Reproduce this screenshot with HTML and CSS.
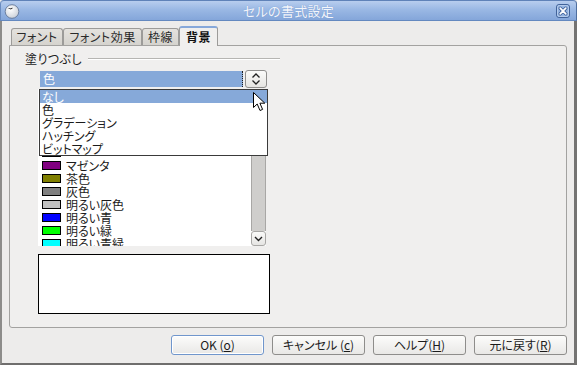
FILE: index.html
```html
<!DOCTYPE html>
<html lang="ja">
<head>
<meta charset="utf-8">
<title>セルの書式設定</title>
<link rel="stylesheet" href="styles.css">
</head>
<body>
<div class="window">
  <div class="titlebar">
    <div class="tb-left">
      <svg class="app-icon" width="16" height="16" viewBox="0 0 16 16">
        <defs>
          <radialGradient id="ig" cx="0.4" cy="0.35" r="0.7">
            <stop offset="0" stop-color="#ffffff"/>
            <stop offset="1" stop-color="#c9cfd8"/>
          </radialGradient>
        </defs>
        <circle cx="8" cy="8.5" r="6.8" fill="url(#ig)" stroke="#5a6f8f" stroke-width="0.8"/>
        <path d="M3.6 5.6 Q5.2 4.4 6.6 5.4 Q7.6 4.6 9 4.9 Q7.6 5.6 6.8 6.6 Q5.4 5.4 3.6 5.6 Z" fill="#1a1a1a"/>
      </svg>
    </div>
    <div class="title">セルの書式設定</div>
    <div class="tb-right">
      <svg class="close" width="14" height="14" viewBox="0 0 14 14">
        <rect x="0.5" y="0.5" width="13" height="13" rx="2.5" fill="#93b3e2" stroke="#41639a"/>
        <rect x="1.5" y="1.5" width="11" height="11" rx="1.8" fill="none" stroke="#bcd0ee" stroke-width="0.8"/>
        <path d="M4.2 4.2 L9.8 9.8 M9.8 4.2 L4.2 9.8" stroke="#41639a" stroke-width="3.4" stroke-linecap="round"/>
        <path d="M4.2 4.2 L9.8 9.8 M9.8 4.2 L4.2 9.8" stroke="#ffffff" stroke-width="1.7" stroke-linecap="round"/>
      </svg>
    </div>
  </div>
  <div class="body">
    <div class="tabs">
      <div class="tab tab-font">フォント</div>
      <div class="tab tab-effect">フォント効果</div>
      <div class="tab tab-border">枠線</div>
      <div class="tab tab-bg active">背景</div>
    </div>
    <div class="panel">
      <div class="section">
        <div class="section-head"><span class="section-label">塗りつぶし</span><span class="rule"></span></div>
        <div class="section-body">
          <div class="combo-wrap">
            <div class="combo">
              <div class="combo-field">色</div>
              <div class="combo-btn">
                <svg width="12" height="14" viewBox="0 0 12 14">
                  <path d="M2.5 5.5 L6 2 L9.5 5.5" fill="none" stroke="#222" stroke-width="1.3"/>
                  <path d="M2.5 8.5 L6 12 L9.5 8.5" fill="none" stroke="#222" stroke-width="1.3"/>
                </svg>
              </div>
            </div>
            <div class="popup">
              <div class="opt selected">なし</div>
              <div class="opt">色</div>
              <div class="opt">グラデーション</div>
              <div class="opt">ハッチング</div>
              <div class="opt">ビットマップ</div>
            </div>
            <svg class="cursor" width="14" height="20" viewBox="0 0 14 20">
              <path d="M0.5 0.5 L0.5 15.5 L4.2 12 L7 18.5 L9.6 17.4 L6.9 11.2 L11.8 11.2 Z" fill="#ffffff" stroke="#000000" stroke-width="1" stroke-linejoin="miter"/>
            </svg>
          </div>
          <div class="colorlist">
            <div class="items">
              <div class="item item-partial"><span class="swatch sw-red"></span></div>
              <div class="item"><span class="swatch sw-magenta"></span>マゼンタ</div>
              <div class="item"><span class="swatch sw-brown"></span>茶色</div>
              <div class="item"><span class="swatch sw-gray"></span>灰色</div>
              <div class="item"><span class="swatch sw-lgray"></span>明るい灰色</div>
              <div class="item"><span class="swatch sw-lblue"></span>明るい青</div>
              <div class="item"><span class="swatch sw-lgreen"></span>明るい緑</div>
              <div class="item"><span class="swatch sw-lcyan"></span>明るい青緑</div>
            </div>
            <div class="scrollbar">
              <div class="track"></div>
              <div class="sb-btn">
                <svg width="9" height="6" viewBox="0 0 9 6">
                  <path d="M1 1 L4.5 4.5 L8 1" fill="none" stroke="#222" stroke-width="1.4"/>
                </svg>
              </div>
            </div>
          </div>
          <div class="preview"></div>
        </div>
      </div>
    </div>
    <div class="buttons">
      <div class="btn default">OK (<u>o</u>)</div>
      <div class="btn">キャンセル (<u>c</u>)</div>
      <div class="btn">ヘルプ(<u>H</u>)</div>
      <div class="btn">元に戻す(<u>R</u>)</div>
    </div>
  </div>
</div>
</body>
</html>
```

FILE: styles.css
```css
* { box-sizing: border-box; }

html, body {
  margin: 0;
  padding: 0;
  background: #edeceb;
}

body {
  font-family: "Noto Sans CJK JP", "DejaVu Sans", sans-serif;
  font-size: 12px;
  color: #1b1b1b;
  font-feature-settings: "palt" 1;
}

.window {
  width: 577px;
  height: 365px;
  display: flex;
  flex-direction: column;
}

/* ---------- title bar ---------- */
.titlebar {
  height: 21px;
  flex: none;
  display: grid;
  grid-template-columns: 1fr auto 1fr;
  align-items: center;
  background: linear-gradient(#b8cdee 0%, #9ab8e4 45%, #84a6da 100%);
  border-top: 1px solid #5f82b8;
  border-bottom: 1px solid #6489c0;
  border-left: 1px solid #6a8cc0;
  border-right: 1px solid #4f6f9f;
  border-radius: 4px 4px 0 0;
}

.tb-left {
  display: flex;
  align-items: center;
  padding-left: 3px;
}

.app-icon { display: block; }

.title {
  font-size: 13px;
  line-height: 19px;
  color: #f3f6fc;
  text-shadow: 0 0 1px #6a8cc4;
  letter-spacing: 0.3px;
}

.tb-right {
  display: flex;
  justify-content: flex-end;
  align-items: center;
  padding-right: 6px;
}

.close { display: block; }

/* ---------- dialog body ---------- */
.body {
  flex: 1;
  display: flex;
  flex-direction: column;
  background: #edeceb;
  border-left: 2px solid #8d8c8a;
  border-right: 3px solid #747372;
  border-bottom: 2px solid #6f6e6d;
  padding: 5px 7px 8px 7px;
}

.tabs {
  height: 19px;
  flex: none;
  display: flex;
  align-items: flex-end;
  padding-left: 2px;
}

.tab {
  height: 17px;
  line-height: 16px;
  text-align: center;
  border: 1px solid #9c9b99;
  border-bottom: none;
  border-radius: 3px 3px 0 0;
  background: linear-gradient(#e4e2de, #d5d3ce);
  color: #2a2a2a;
  letter-spacing: 0.5px;
}

.tab-font { width: 52px; }
.tab-effect { width: 79px; }
.tab-border { width: 37px; }
.tab-bg { width: 39px; }

.tab.active {
  height: 20px;
  margin-bottom: -1px;
  position: relative;
  z-index: 1;
  background: #f0efee;
  border-top: 2px solid #86a8da;
  font-weight: bold;
  color: #111;
  line-height: 17px;
}

.panel {
  height: 283px;
  flex: none;
  border: 1px solid #a3a2a0;
  border-radius: 0 3px 3px 3px;
  background: #f0efee;
  padding: 6px 0 0 15px;
}

.section {
  width: 255px;
}

.section-head {
  display: flex;
  align-items: center;
  height: 14px;
  line-height: 14px;
}

.section-label {
  color: #222;
  letter-spacing: 0.4px;
}

.rule {
  flex: 1;
  height: 2px;
  margin-left: 6px;
  margin-top: -1px;
  border-top: 1px solid #b6b5b2;
  border-bottom: 1px solid #ffffff;
}

.section-body {
  padding-left: 13px;
  margin-top: 4px;
}

/* ---------- combo box ---------- */
.combo-wrap {
  position: relative;
  width: 230px;
}

.combo {
  height: 18px;
  display: flex;
}

.combo-field {
  width: 203px;
  margin: 1px 0 1px 2px;
  background: #86a9d9;
  color: #ffffff;
  line-height: 16px;
  padding-left: 3px;
  border-right: 1px dotted #1d1d1d;
}

.combo-btn {
  width: 22px;
  margin-left: 2px;
  border: 1px solid #8f8e8c;
  border-radius: 3px;
  background: linear-gradient(#fbfbfa, #e6e5e2);
  display: flex;
  align-items: center;
  justify-content: center;
}

.combo-btn svg { display: block; }

.popup {
  position: absolute;
  left: 1px;
  top: 19px;
  width: 229px;
  border: 1px solid #3a3a3a;
  background: #ffffff;
  z-index: 2;
}

.opt {
  height: 13px;
  line-height: 13px;
  padding-left: 2px;
  white-space: nowrap;
}

.opt.selected {
  background: #86a9d9;
  color: #ffffff;
}

.cursor {
  position: absolute;
  left: 215px;
  top: 22px;
  z-index: 3;
  display: block;
}

/* ---------- colour list ---------- */
.colorlist {
  margin-top: 1px;
  width: 228px;
  height: 157px;
  display: flex;
}

.items {
  flex: 1;
  background: #ffffff;
  overflow: hidden;
  padding-top: 57px;
}

.item {
  height: 13px;
  display: flex;
  align-items: center;
  white-space: nowrap;
  line-height: 13px;
}

.swatch {
  width: 19px;
  height: 9px;
  margin-left: 4px;
  margin-right: 5px;
  border: 1px solid #000000;
  flex: none;
}

.sw-red { background: #800000; }
.sw-magenta { background: #800080; }
.sw-brown { background: #808000; }
.sw-gray { background: #808080; }
.sw-lgray { background: #c0c0c0; }
.sw-lblue { background: #0000ff; }
.sw-lgreen { background: #00ff00; }
.sw-lcyan { background: #00ffff; }

.scrollbar {
  width: 15px;
  display: flex;
  flex-direction: column;
  background: #ffffff;
}

.track {
  flex: 1;
  background: #cfcecc;
  border: 1px solid #a8a7a5;
  border-bottom: none;
  border-radius: 2px 2px 0 0;
}

.sb-btn {
  height: 15px;
  border: 1px solid #a8a7a5;
  border-radius: 3px;
  background: linear-gradient(#fafaf9, #e6e5e3);
  display: flex;
  align-items: center;
  justify-content: center;
}

.sb-btn svg { display: block; }

.preview {
  margin-top: 8px;
  width: 232px;
  height: 60px;
  border: 1px solid #000000;
  background: #ffffff;
}

/* ---------- buttons ---------- */
.buttons {
  margin-top: 7px;
  height: 20px;
  display: flex;
  justify-content: flex-end;
  gap: 8px;
}

.btn {
  width: 93px;
  height: 20px;
  border: 1px solid #8e8d8b;
  border-radius: 3px;
  background: linear-gradient(#fcfcfb, #e9e8e6);
  text-align: center;
  line-height: 18px;
  color: #1b1b1b;
}

.btn.default {
  border-color: #7096cc;
  box-shadow: inset 0 0 0 1px #ffffff;
}

.btn u {
  text-underline-offset: 1px;
}
```
